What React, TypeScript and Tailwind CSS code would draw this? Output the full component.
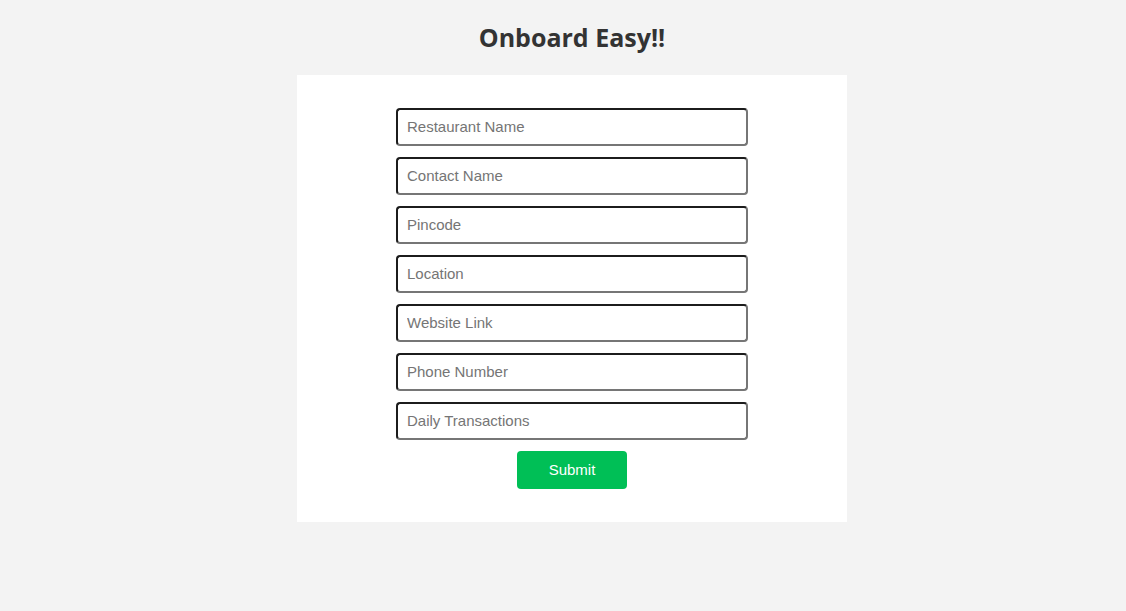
import React from "react";

const fields = [
  "Restaurant Name",
  "Contact Name",
  "Pincode",
  "Location",
  "Website Link",
  "Phone Number",
  "Daily Transactions",
];

export default function App() {
  return (
    <div className="min-h-[611px] bg-[#f3f3f3] pl-[18px] font-['Liberation_Sans',Arial,sans-serif]">
      {/* Heading */}
      <h1 className="pt-[20px] h-[75px] text-center text-[25px] leading-[34px] font-bold text-[#333] font-['Open_Sans',sans-serif]">
        Onboard Easy!!
      </h1>

      {/* Form card */}
      <div className="mx-auto w-[550px] bg-white pt-[33px] pb-[33px]">
        <form className="flex flex-col items-center gap-[11px]" onSubmit={(e) => e.preventDefault()}>
          {fields.map((f) => (
            <input
              key={f}
              type="text"
              placeholder={f}
              className="w-[352px] h-[38px] rounded-[4px] border-2 border-t-[#1c1c1c] border-l-[#1c1c1c] border-b-[#767676] border-r-[#767676] bg-white px-[9px] pb-[2px] text-[15px] text-[#333] placeholder:text-[#757575] outline-none"
            />
          ))}
          <button
            type="submit"
            className="w-[110px] h-[38px] rounded-[4px] bg-[#00bf56] text-white text-[15px]"
          >
            Submit
          </button>
        </form>
      </div>
    </div>
  );
}
